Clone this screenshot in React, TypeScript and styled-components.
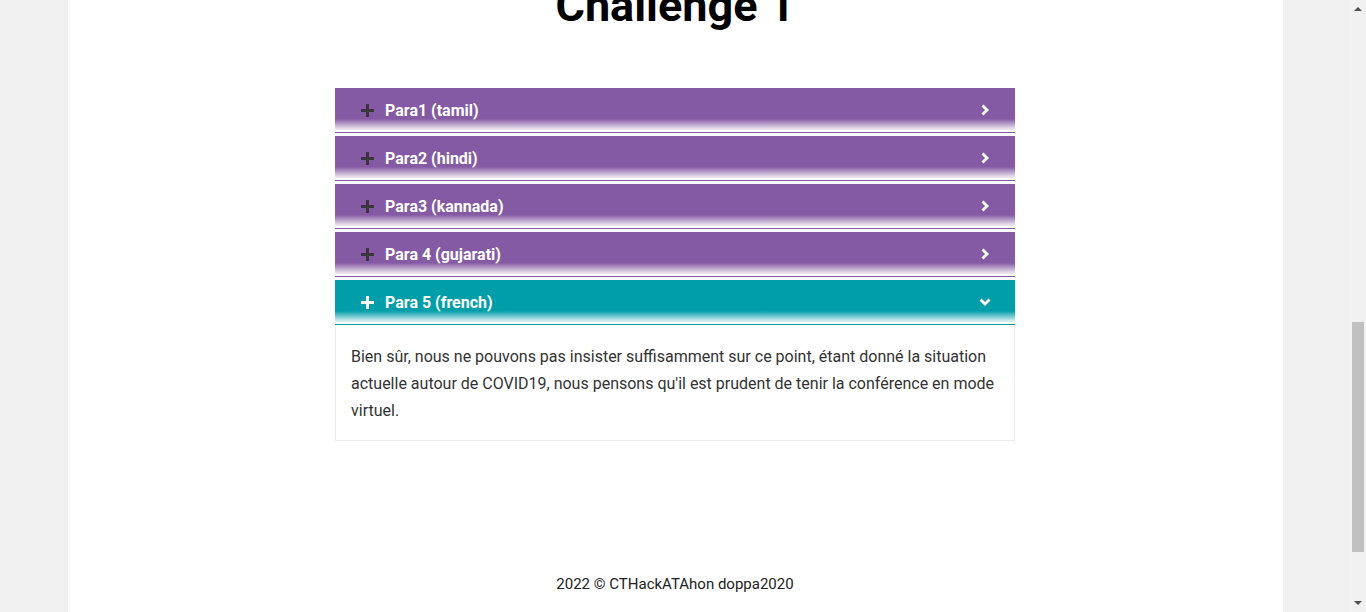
import React, { useState } from 'react'
import styled, { createGlobalStyle } from 'styled-components'

const purple = '#855aa4'
const teal = '#009ea9'

const paras = [
  { title: 'Para1 (tamil)', text: '' },
  { title: 'Para2 (hindi)', text: '' },
  { title: 'Para3 (kannada)', text: '' },
  { title: 'Para 4 (gujarati)', text: '' },
  {
    title: 'Para 5 (french)',
    text: "Bien sûr, nous ne pouvons pas insister suffisamment sur ce point, étant donné la situation actuelle autour de COVID19, nous pensons qu'il est prudent de tenir la conférence en mode virtuel.",
  },
]

const PlusIcon = ({ active }: { active: boolean }) => (
  <svg width="13" height="13" viewBox="0 0 13 13">
    <rect x="5" y="0" width="3" height="13" fill={active ? '#fff' : '#3b3340'} />
    <rect x="0" y="5" width="13" height="3" fill={active ? '#fff' : '#3b3340'} />
  </svg>
)

const Chevron = ({ open }: { open: boolean }) => (
  <svg width="12" height="12" viewBox="0 0 12 12">
    {open
      ? <polyline points="1.5,3.5 6,8 10.5,3.5" fill="none" stroke="#fff" strokeWidth="2.8" />
      : <polyline points="3.5,1.5 8,6 3.5,10.5" fill="none" stroke="#fff" strokeWidth="2.8" />}
  </svg>
)

export default function App() {
  const [open, setOpen] = useState<number | null>(4)

  return (
    <>
      <GlobalStyle />
      <Viewport>
        <Main>
          <Page>
            <Title>Challenge 1</Title>
            <Accordion>
              {paras.map((p, i) => {
                const isOpen = open === i
                return (
                  <Item key={p.title}>
                    <Header $active={isOpen} onClick={() => setOpen(isOpen ? null : i)}>
                      <PlusIcon active={isOpen} />
                      <HeaderTitle>{p.title}</HeaderTitle>
                      <Chevron open={isOpen} />
                    </Header>
                    {isOpen && <Body>{p.text}</Body>}
                  </Item>
                )
              })}
            </Accordion>
            <Footer>2022 © CTHackATAhon doppa2020</Footer>
          </Page>
        </Main>
        <ScrollRail>
          <ArrowUp />
          <Track>
            <Thumb />
          </Track>
          <ArrowDown />
        </ScrollRail>
      </Viewport>
    </>
  )
}

const GlobalStyle = createGlobalStyle`
  body {
    margin: 0;
    background: #f0f0f0;
    font-family: Roboto, "Liberation Sans", Arial, sans-serif;
    overflow: hidden;
  }
`

const Viewport = styled.div`
  display: flex;
  height: 100vh;
  overflow: hidden;
`

const Main = styled.div`
  flex: 1;
  display: flex;
  justify-content: center;
  background: #f0f0f0;
`

const Page = styled.div`
  width: 1215px;
  background: #fff;
  display: flex;
  flex-direction: column;
`

const Title = styled.h2`
  margin: -21px 0 0;
  font-size: 45px;
  line-height: 53px;
  font-weight: 700;
  color: #000;
  text-align: center;
`

const Accordion = styled.div`
  width: 680px;
  margin: 56px auto 0;
`

const Item = styled.div`
  margin-bottom: 3px;
`

const Header = styled.div<{ $active: boolean }>`
  height: 44px;
  display: flex;
  align-items: center;
  padding: 0 24px 0 26px;
  cursor: pointer;
  color: #fff;
  background: ${p => {
    const c = p.$active ? teal : purple
    return `linear-gradient(180deg, ${c} 0%, ${c} 70%, #fff 98%)`
  }};
  border-bottom: 1px solid ${p => (p.$active ? teal : purple)};
  svg:last-child {
    margin-left: auto;
  }
`

const HeaderTitle = styled.span`
  margin-left: 11px;
  font-size: 16px;
  font-weight: 700;
`

const Body = styled.div`
  border: 1px solid #ececec;
  border-top: none;
  padding: 18px 15px 16px;
  margin-bottom: -3px;
  font-size: 16px;
  line-height: 27px;
  color: #333;
`

const Footer = styled.footer`
  margin-top: 133px;
  text-align: center;
  font-size: 15px;
  line-height: 20px;
  color: #222;
`

const ScrollRail = styled.div`
  width: 16px;
  background: #f1f1f1;
  display: flex;
  flex-direction: column;
  align-items: center;
`

const ArrowUp = styled.div`
  width: 0;
  height: 0;
  margin: 7px 0 5px;
  border-left: 4px solid transparent;
  border-right: 4px solid transparent;
  border-bottom: 4px solid #505050;
`

const ArrowDown = styled.div`
  width: 0;
  height: 0;
  margin: 5px 0 7px;
  border-left: 4px solid transparent;
  border-right: 4px solid transparent;
  border-top: 4px solid #505050;
`

const Track = styled.div`
  flex: 1;
  width: 100%;
  display: flex;
  flex-direction: column;
  align-items: center;
`

const Thumb = styled.div`
  width: 12px;
  height: 230px;
  margin-top: 306px;
  background: #c1c1c1;
`
